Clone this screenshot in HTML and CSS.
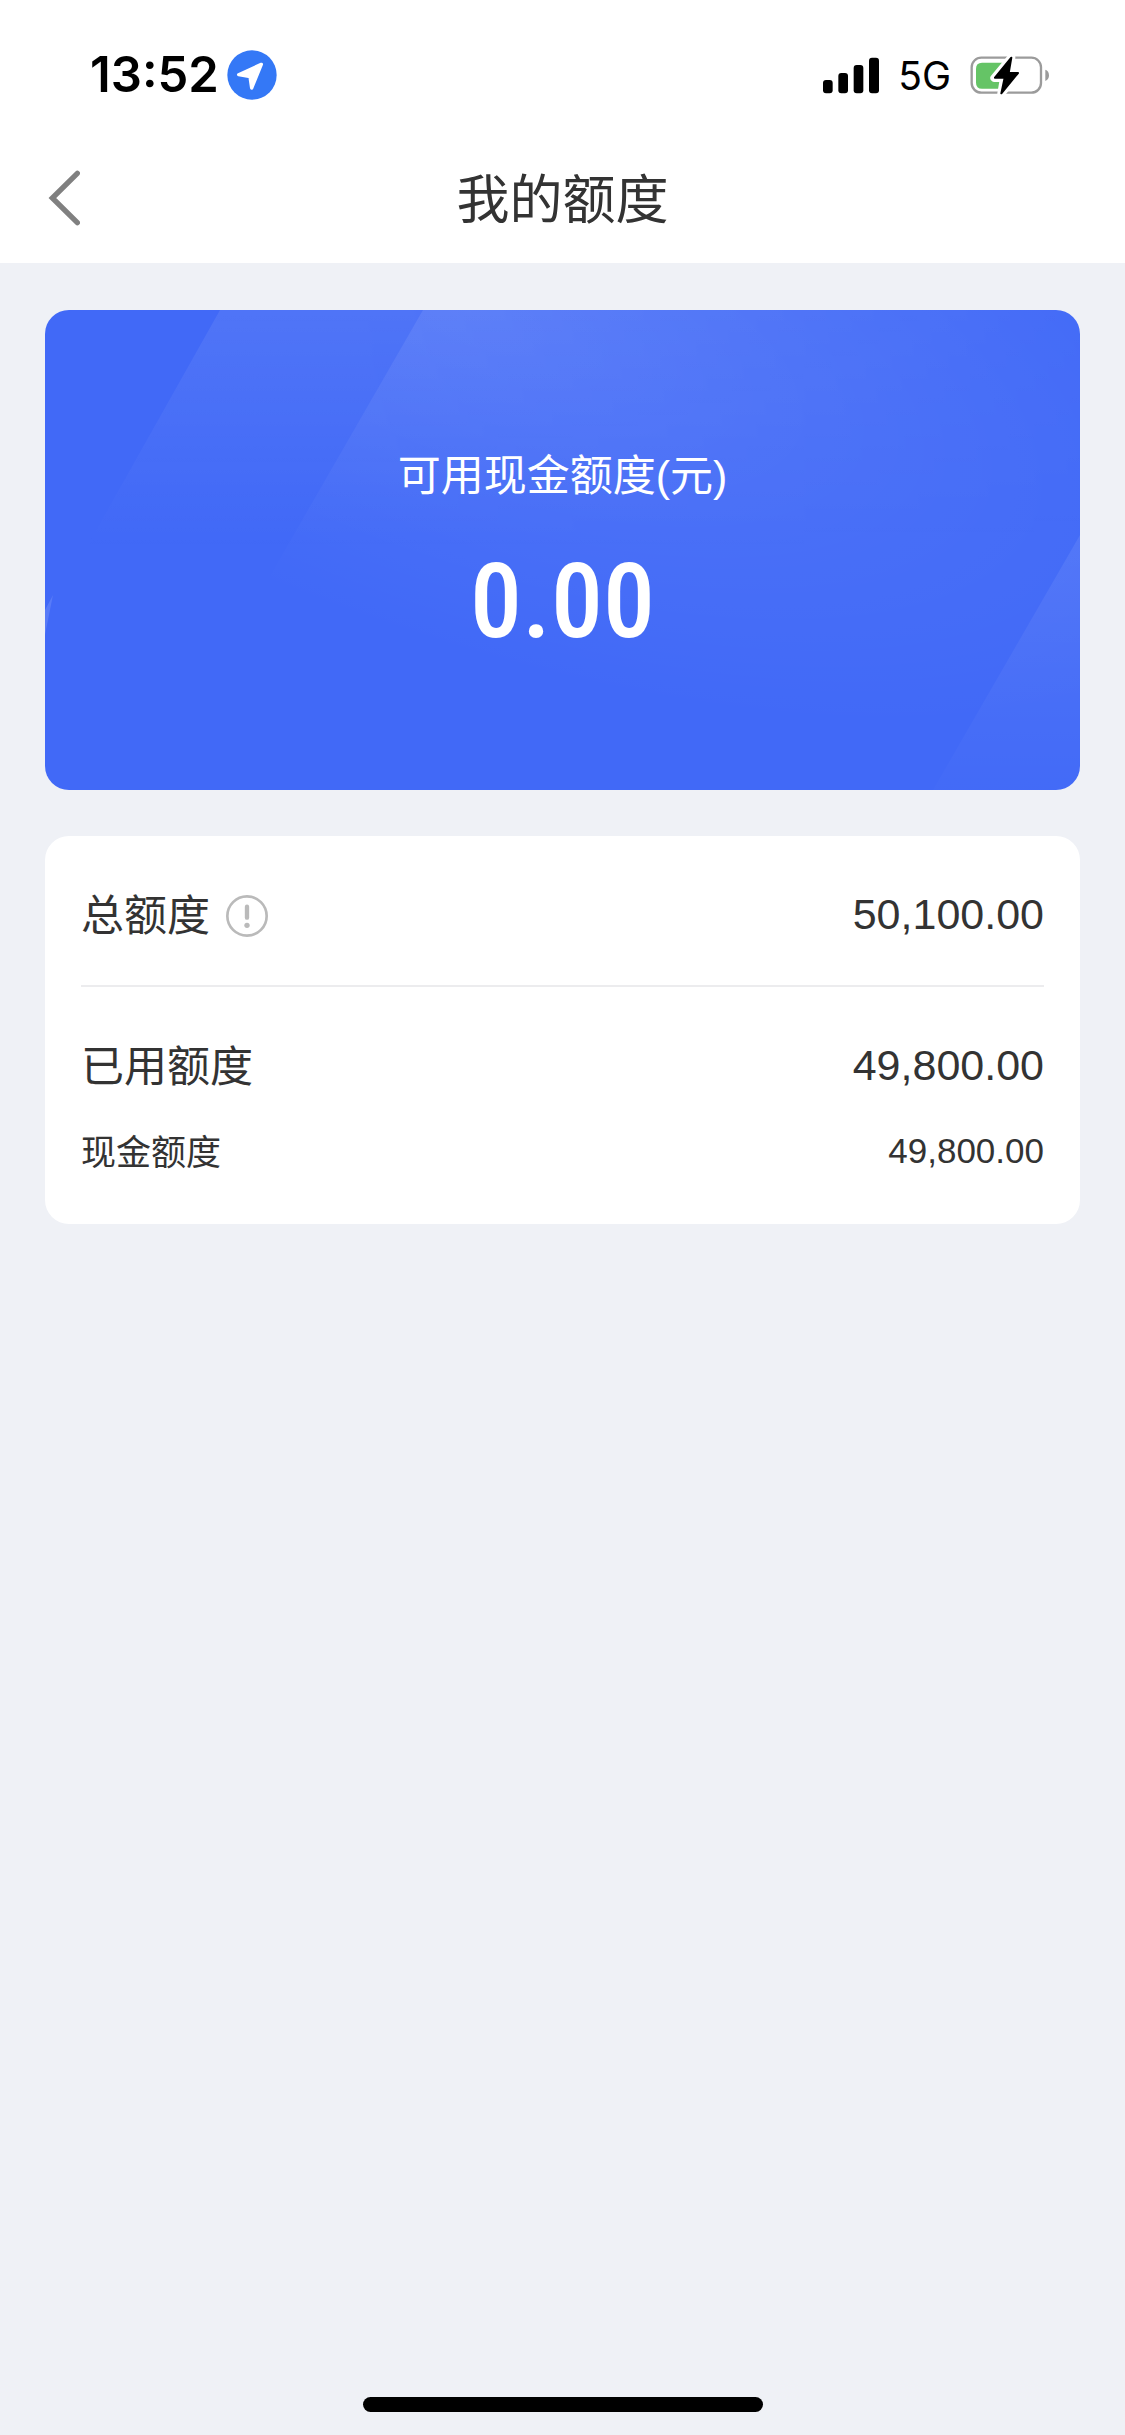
FILE: index.html
```html
<!DOCTYPE html>
<html lang="zh-CN">
<head>
<meta charset="utf-8">
<meta name="viewport" content="width=device-width, initial-scale=1">
<title>我的额度</title>
<link rel="stylesheet" href="styles.css">
</head>
<body>
<div class="page">
  <header class="header">
    <div class="status">
      <div class="status-group">
        <span class="time">13:52</span>
        <svg class="location" viewBox="0 0 150 150" aria-hidden="true">
          <circle cx="75" cy="75" r="74" fill="#3478f6"/>
          <path d="M103 43 L35 74 L69 80 L74 114 Z" fill="#fff" stroke="#fff" stroke-width="10" stroke-linejoin="round"/>
        </svg>
      </div>
      <div class="status-group status-right">
        <svg class="signal" viewBox="0 0 168 111" aria-hidden="true">
          <rect x="0" y="69" width="29" height="40" rx="9"/>
          <rect x="46" y="48" width="29" height="61" rx="9"/>
          <rect x="92" y="24" width="29" height="85" rx="9"/>
          <rect x="138" y="2" width="30" height="107" rx="9"/>
        </svg>
        <span class="network">5G</span>
        <svg class="battery" viewBox="510 72 240 120" aria-hidden="true">
          <rect x="515" y="80" width="208" height="105" rx="29" fill="none" stroke="#9b9b9b" stroke-width="7"/>
          <path d="M736 116 Q747 120 747 133 Q747 146 736 150 Z" fill="#9b9b9b"/>
          <path d="M607 95 H546 Q528 95 528 113 V155 Q528 173 546 173 H607 Z" fill="#65c466"/>
          <path d="M634 80 L583 141 H612 L604 187 L656 125 H627 Z" fill="#000" stroke="#fff" stroke-width="24" stroke-linejoin="round"/>
          <path d="M634 80 L585 140 H614 L604 187 L654 126 H626 Z" fill="#000" stroke="#000" stroke-width="6" stroke-linejoin="round"/>
        </svg>
      </div>
    </div>
    <nav class="nav">
      <button class="back" type="button" aria-label="返回">
        <svg class="back-icon" viewBox="146 91 96 168" aria-hidden="true">
          <path d="M234 101 L159 175 L234 249" fill="none" stroke="#808080" stroke-width="16" stroke-linecap="round"/>
        </svg>
      </button>
      <h1 class="title">我的额度</h1>
    </nav>
  </header>

  <main class="main">
    <section class="balance">
      <svg class="balance-art" viewBox="0 0 1035 480" preserveAspectRatio="none" aria-hidden="true">
        <defs>
          <linearGradient id="wide" x1="0" y1="0" x2="0" y2="240" gradientUnits="userSpaceOnUse">
            <stop offset="0" stop-color="#fff" stop-opacity=".08"/>
            <stop offset="1" stop-color="#fff" stop-opacity="0"/>
          </linearGradient>
          <linearGradient id="widefade" x1="300" y1="0" x2="1035" y2="0" gradientUnits="userSpaceOnUse">
            <stop offset="0" stop-color="#fff"/>
            <stop offset="1" stop-color="#333"/>
          </linearGradient>
          <mask id="fade"><rect width="1035" height="480" fill="url(#widefade)"/></mask>
          <radialGradient id="beam" cx="0" cy="0" r="1" gradientUnits="userSpaceOnUse" gradientTransform="translate(420 0) rotate(20) scale(820 330)">
            <stop offset="0" stop-color="#fff" stop-opacity=".09"/>
            <stop offset="1" stop-color="#fff" stop-opacity="0"/>
          </radialGradient>
          <linearGradient id="corner" x1="1035" y1="225" x2="1035" y2="480" gradientUnits="userSpaceOnUse">
            <stop offset="0" stop-color="#fff" stop-opacity=".08"/>
            <stop offset="1" stop-color="#fff" stop-opacity=".01"/>
          </linearGradient>
        </defs>
        <path d="M175 0 H1035 V240 H40 Z" fill="url(#wide)" mask="url(#fade)"/>
        <path d="M378 0 H1035 V480 H102 Z" fill="url(#beam)"/>
        <path d="M1035 225 V480 H888 Z" fill="url(#corner)"/>
        <path d="M8 285 L0 300 V325 Z" fill="#fff" fill-opacity=".12"/>
      </svg>
      <h2 class="balance-label">可用现金额度(元)</h2>
      <p class="balance-value">0.00</p>
    </section>

    <section class="details">
      <div class="detail-group">
        <div class="row">
          <span class="row-label">总额度
            <button class="info" type="button" aria-label="总额度说明">
              <svg class="info-icon" viewBox="0 0 126 132" aria-hidden="true">
                <circle cx="63" cy="66" r="59" fill="none" stroke="#bababa" stroke-width="8"/>
                <path d="M63 38 V71" stroke="#bababa" stroke-width="13" stroke-linecap="round"/>
                <circle cx="63" cy="94" r="8" fill="#bababa"/>
              </svg>
            </button>
          </span>
          <span>50,100.00</span>
        </div>
      </div>
      <div class="detail-group">
        <div class="row">
          <span class="row-label">已用额度</span>
          <span>49,800.00</span>
        </div>
        <div class="row row-small">
          <span class="row-label">现金额度</span>
          <span>49,800.00</span>
        </div>
      </div>
    </section>
  </main>

  <div class="home-bar"></div>
</div>
</body>
</html>
```
FILE: styles.css
```css
* {
  box-sizing: border-box;
}

body {
  margin: 0;
  background: #eff1f6;
  color: #333;
  font-family: "Liberation Sans", "Noto Sans CJK SC", sans-serif;
}

button {
  display: flex;
  padding: 0;
  border: 0;
  background: none;
  cursor: pointer;
}

svg {
  display: block;
}

.page {
  display: flex;
  flex-direction: column;
  min-height: 100vh;
}

.header {
  background: #fff;
}

.status {
  display: flex;
  justify-content: space-between;
  padding: 39px 75px 20px 90px;
  color: #000;
  font-family: Inter, sans-serif;
  line-height: 72px;
}

.status-group {
  display: flex;
  align-items: center;
  gap: 8px;
}

.status-right {
  gap: 19px;
}

.time {
  font-size: 49px;
  font-weight: 600;
}

.network {
  padding-top: 2px;
  font-size: 39px;
  font-weight: 400;
  line-height: 70px;
}

.location {
  width: 50px;
  height: 50px;
}

.signal {
  width: 56px;
  height: 37px;
}

.battery {
  width: 80px;
  height: 40px;
}

.nav {
  display: grid;
  grid-template-columns: 1fr auto 1fr;
  align-items: center;
  height: 132px;
  padding: 2px 48px 0;
}

.back {
  justify-self: start;
}

.back-icon {
  width: 32px;
  height: 56px;
}

.title {
  margin: 0;
  padding-top: 6px;
  font-size: 53px;
  font-weight: 400;
  line-height: 80px;
}

.main {
  display: flex;
  flex-direction: column;
  gap: 46px;
  padding: 47px 45px;
}

.balance {
  position: relative;
  display: flex;
  flex-direction: column;
  gap: 36px;
  padding: 136px 24px 128px;
  border-radius: 24px;
  overflow: hidden;
  background: #4169f7;
  color: #fff;
  text-align: center;
}

.balance-art {
  position: absolute;
  inset: 0;
  width: 100%;
  height: 100%;
}

.balance-label,
.balance-value {
  position: relative;
  margin: 0;
}

.balance-label {
  font-size: 43px;
  font-weight: 400;
  line-height: 60px;
}

.balance-value {
  font-family: "Liberation Sans Narrow", "Roboto Condensed", Roboto, sans-serif;
  font-size: 104px;
  font-weight: 500;
  line-height: 120px;
}

.details {
  padding: 0 36px;
  border-radius: 24px;
  background: #fff;
}

.detail-group {
  display: flex;
  flex-direction: column;
  gap: 32px;
  padding: 48px 0 49px;
}

.detail-group:first-child {
  padding-bottom: 41px;
  border-bottom: 2px solid #ececee;
}

.row {
  display: flex;
  justify-content: space-between;
  font-size: 43px;
  line-height: 60px;
}

.row-small {
  font-size: 35px;
  line-height: 48px;
}

.row-label {
  display: flex;
  align-items: center;
  gap: 16px;
  padding-top: 2px;
  margin-bottom: -2px;
}

.info-icon {
  width: 42px;
  height: 44px;
}

.home-bar {
  width: 36%;
  max-width: 400px;
  height: 15px;
  margin: auto auto 23px;
  border-radius: 8px;
  background: #000;
}
```
